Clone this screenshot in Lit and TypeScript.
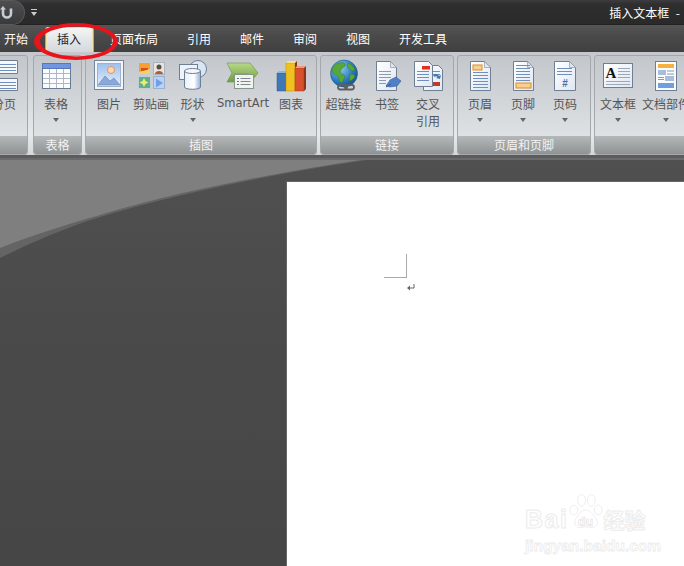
import { LitElement, html, css, svg } from "lit";
import { customElement } from "lit/decorators.js";

const docBase = (x: number, y: number, w: number, h: number) => svg`
  <path d="M${x} ${y}h${w - 6}l6 6v${h - 6}h${-w}z" fill="url(#paper)" stroke="#6f7f93"/>
  <path d="M${x + w - 6} ${y}v6h6z" fill="#dfe6ee" stroke="#8a98aa" stroke-width=".7"/>`;
const lines = (x: number, ys: number[], w: number, c = "#6f8fc0") =>
  ys.map((y) => svg`<path d="M${x} ${y}h${w}" stroke="${c}"/>`);

const defs = svg`<defs>
  <linearGradient id="paper" x1="0" y1="0" x2="1" y2="1"><stop offset="0" stop-color="#fff"/><stop offset="1" stop-color="#dfe7f2"/></linearGradient>
  <linearGradient id="sky" x1="0" y1="0" x2="0" y2="1"><stop offset="0" stop-color="#9cc0ec"/><stop offset="1" stop-color="#e8f0fb"/></linearGradient>
  <linearGradient id="cyl" x1="0" y1="0" x2="1" y2="0"><stop offset="0" stop-color="#e8f0fb"/><stop offset=".6" stop-color="#fff"/><stop offset="1" stop-color="#8eb0dc"/></linearGradient>
  <radialGradient id="globe" cx=".35" cy=".3" r=".8"><stop offset="0" stop-color="#8fd0f5"/><stop offset=".6" stop-color="#2a7cc0"/><stop offset="1" stop-color="#124a80"/></radialGradient>
  <linearGradient id="grn" x1="0" y1="0" x2="0" y2="1"><stop offset="0" stop-color="#b8d88a"/><stop offset="1" stop-color="#6fa03c"/></linearGradient>
</defs>`;

const icons: Record<string, unknown> = {
  pagebreak: svg`
    <path d="M1.5 1.5h30v13h-30z" fill="#f6f8fb" stroke="#6f7f93"/>${lines(3, [5.5, 8.5, 11.5], 27)}
    <path d="M1.5 19.5h30v12h-30z" fill="#f6f8fb" stroke="#6f7f93"/>${lines(3, [23.5, 26.5, 29.5], 27)}`,
  table: svg`
    <rect x="4.5" y="4.5" width="28" height="25" fill="#fbfcfe" stroke="#6a7a90"/>
    <rect x="4.5" y="4.5" width="28" height="5" fill="#6f96e0" stroke="#5678b8"/>
    <path d="M11.5 10v19M18.5 10v19M25.5 10v19M5 14.5h27M5 19.5h27M5 24.5h27" stroke="#aeb8c6"/>`,
  picture: svg`
    <rect x="3.5" y="1.5" width="29" height="29" fill="#f2f6fb" stroke="#76879c"/>
    <rect x="6.5" y="4.5" width="23" height="23" fill="url(#sky)" stroke="#9db2cc"/>
    <circle cx="20" cy="11" r="3.5" fill="#f8d8b8" stroke="#ee8f50"/>
    <path d="M7 26l7-9 5 5 4-3 6 7z" fill="#8aa9d8" stroke="#6684b4" stroke-width=".6"/>`,
  clip: svg`
    <rect x="5.5" y="3.5" width="12" height="12" fill="#f5a030" stroke="#c4ccd6"/><path d="M8 9h7v3h-7z" fill="#d84a20"/><path d="M6 13l11-3v5H6z" fill="#f8d060"/>
    <rect x="20.5" y="3.5" width="11" height="12" fill="#e8e4de" stroke="#aab4c0"/><circle cx="26" cy="8" r="2.5" fill="#55504a"/><path d="M22 15c0-4 8-4 8 0z" fill="#b85a30"/>
    <rect x="5.5" y="17.5" width="12" height="12" fill="#5fae90" stroke="#c4ccd6"/><path d="M11 19l1.500 3 3 1.500-3 1.500-1.500 3-1.500-3-3-1.500 3-1.500z" fill="#ecec70"/>
    <rect x="20.500" y="17.500" width="11" height="12" fill="#bcd2f4" stroke="#9cb0cc"/><path d="M23 19.500l7 4.500-7 4.500z" fill="#6f9fe8"/>`,
  shapes: svg`
    <circle cx="23" cy="10" r="8.500" fill="#dbe6f5" stroke="#6f7f93"/>
    <rect x="4.500" y="5.500" width="18" height="15" fill="#eef3fb" stroke="#6f7f93"/>
    <path d="M9.500 12v16c0 3 16 3 16 0V12z" fill="url(#cyl)" stroke="#6f7f93"/>
    <ellipse cx="17.500" cy="12" rx="8" ry="2.500" fill="#f4f8fe" stroke="#6f7f93"/>`,
  smartart: svg`
    <path d="M2 4h23l8 10-5 6H24v-5H9V23H2l5-9z" fill="url(#grn)" stroke="#6a9040" stroke-width=".6"/>
    <rect x="9.500" y="15.500" width="19" height="14" fill="#f2f3ec" stroke="#8a9488"/>
    <path d="M12 19.500h2M12 22.500h2M12 25.500h2" stroke="#4f7f80"/><path d="M15.500 19.500h10M15.500 22.500h10M15.500 25.500h10" stroke="#7a8a96"/>`,
  chart: svg`
    <path d="M4 14h9v18H4z" fill="#3f78b4" stroke="#2a5a90" stroke-width=".5"/><path d="M4 14l2-2h8l-1 2z" fill="#8cb4dc"/>
    <path d="M13 4h9v28h-9z" fill="#f0c020" stroke="#b88c10" stroke-width=".5"/><path d="M13 4l2-2h9l-2 2z" fill="#fae080"/>
    <path d="M22 9h9v23h-9z" fill="#d8502c" stroke="#a83818" stroke-width=".5"/><path d="M22 9l2-2h9l-2 2z" fill="#f09880"/>
    <path d="M22 4l2-2v5l-2 2zM31 9l2-2v23l-2 2z" fill="#8f3418"/>`,
  globe: svg`
    <circle cx="18" cy="14.500" r="13.500" fill="url(#globe)" stroke="#205880" stroke-width=".6"/>
    <path d="M9 6c4-3 8-3 10-1 1 3-3 3-4 6-2 3 1 4 3 5 2 2-1 5-2 8-3-1-3-4-4-7-3-1-4-3-6-4 0-3 1-5 3-7zM22 4c3 1 6 4 7 7-2 2-4 0-6-1-2-2-2-4-1-6zM25 15c2 0 3 1 4 2-1 3-3 4-5 5-1-3-1-5 1-7z" fill="#58a838" stroke="#327020" stroke-width=".4"/>
    <g fill="none" stroke="#5a5f66" stroke-width="1.800"><rect x="12" y="26" width="9" height="4.500" rx="2.200"/><rect x="19" y="26" width="9" height="4.500" rx="2.200"/></g>`,
  bookmark: svg`
    ${docBase(7.500, 2.500, 20, 29)}
    ${lines(10, [12.500, 15.500, 18.500], 12, "#8a9ab0")}${lines(10, [21.500, 24.500], 7, "#8a9ab0")}
    <path d="M17 27l4-6 6-3 5 4-4 5-7 1z" fill="#4f80c8" stroke="#345a98" stroke-width=".6"/><path d="M17 28l5-3" stroke="#345a98"/>`,
  cross: svg`
    <path d="M13.500 6.500h15l4 4v21h-19z" fill="url(#paper)" stroke="#6f7f93"/>
    ${lines(22, [12.500, 15.500], 8)}
    <rect x="23" y="23" width="7" height="4" fill="#c0392b"/>
    <path d="M4.500 2.500h14l4 4v21h-18z" fill="url(#paper)" stroke="#6f7f93"/>
    <rect x="12" y="7" width="8" height="3.500" fill="#e0301e"/>
    ${lines(7, [12.500, 15.500, 18.500, 21.500], 12)}
    <path d="M23 16c3-2 5-1 6 1l2-1-1 4-4-1 1.500-1c-1-1-2-1-3 0z" fill="#3f78b4"/>`,
  header: svg`
    ${docBase(8.500, 2.500, 20, 29)}
    <rect x="11" y="6" width="9" height="5" fill="#f5d090" stroke="#e08a20"/>
    ${lines(11, [13.500, 16.500, 19.500, 22.500, 25.500, 28.500], 15)}`,
  footer: svg`
    ${docBase(8.500, 2.500, 20, 29)}
    ${lines(11, [6.500, 9.500, 12.500, 15.500, 18.500, 21.500], 14)}
    <rect x="11" y="24" width="15" height="5" fill="#f5d090" stroke="#e08a20"/>`,
  pagenum: svg`
    ${docBase(7.500, 2.500, 21, 29)}
    ${lines(10, [9.500, 12.500, 15.500], 15)}
    <text x="18" y="28" text-anchor="middle" font-family="Liberation Sans, sans-serif" font-weight="700" font-size="10" fill="#4f6fa0">#</text>`,
  textbox: svg`
    <rect x="3.500" y="4.500" width="29" height="24" fill="url(#paper)" stroke="#6f7f93"/>
    <text x="11" y="19" text-anchor="middle" font-family="Liberation Serif, serif" font-weight="700" font-size="15" fill="#111">A</text>
    ${lines(18, [9.500, 12.500, 15.500, 18.500], 12, "#9aa8bc")}${lines(6, [22.500, 25.500], 24, "#9aa8bc")}`,
  parts: svg`
    <rect x="7.500" y="2.500" width="21" height="29" fill="#fbfcfe" stroke="#6f7f93"/>
    <rect x="10" y="5" width="16" height="4" fill="#f6b040"/>
    <rect x="10" y="11" width="8" height="5" fill="#a9bcd8"/><path d="M19 12h7M19 15h7" stroke="#8098bc"/>
    <path d="M10 18.500h6M10 20.500h6" stroke="#8098bc"/><rect x="17" y="17" width="9" height="5" fill="#a9bcd8"/>
    <rect x="10" y="24" width="16" height="5" fill="#6f9fe0"/>`,
};

type Item = { label: string; icon: string; w: number; caret?: boolean };
type Group = { title: string; w: number; ml?: number; pad?: number; items: Item[] };

const groups: Group[] = [
  { title: "", w: 58, ml: -30, pad: 13, items: [{ label: "分页", icon: "pagebreak", w: 40 }] },
  { title: "表格", w: 49, ml: 2, items: [{ label: "表格", icon: "table", w: 44, caret: true }] },
  {
    title: "插图", w: 232, items: [
      { label: "图片", icon: "picture", w: 46 },
      { label: "剪贴画", icon: "clip", w: 38 },
      { label: "形状", icon: "shapes", w: 45, caret: true },
      { label: "SmartArt", icon: "smartart", w: 56 },
      { label: "图表", icon: "chart", w: 40 },
    ],
  },
  {
    title: "链接", w: 134, items: [
      { label: "超链接", icon: "globe", w: 45 },
      { label: "书签", icon: "bookmark", w: 42 },
      { label: "交叉\n引用", icon: "cross", w: 40 },
    ],
  },
  {
    title: "页眉和页脚", w: 134, items: [
      { label: "页眉", icon: "header", w: 44, caret: true },
      { label: "页脚", icon: "footer", w: 42, caret: true },
      { label: "页码", icon: "pagenum", w: 42, caret: true },
    ],
  },
  {
    title: "", w: 100, items: [
      { label: "文本框", icon: "textbox", w: 46, caret: true },
      { label: "文档部件", icon: "parts", w: 50, caret: true },
    ],
  },
];

const tabs = ["开始", "插入", "页面布局", "引用", "邮件", "审阅", "视图", "开发工具"];

@customElement("app-root")
export class AppRoot extends LitElement {
  static styles = css`
    :host {
      display: block;
      position: relative;
      width: 684px;
      height: 566px;
      overflow: hidden;
      font-family: "Noto Sans CJK SC", "Noto Sans", sans-serif;
      font-size: 12px;
      background: #4a4a4a;
    }
    .title {
      height: 25px;
      display: flex;
      align-items: center;
      background: linear-gradient(#3d3d40 0, #2f2f30 4px, #2a2a2a 100%);
      color: #fff;
      border-bottom: 1px solid #222;
      box-sizing: border-box;
    }
    .orb {
      width: 25px;
      height: 25px;
      border-radius: 0 13px 13px 0;
      background: linear-gradient(#4e4e50, #3a3a3c);
      border: 1px solid #5a5a5a;
      border-left: none;
      box-sizing: border-box;
      display: flex;
      align-items: center;
    }
    .qat { margin-left: 5px; display: flex; }
    .caption { margin-left: auto; padding-right: 4px; white-space: pre; line-height: 25px; word-spacing: 4px; }
    .tabs {
      height: 27px;
      display: flex;
      background: linear-gradient(#555 0, #4a4a4a 40%, #404040 100%);
      color: #fff;
    }
    .tab {
      padding: 0 11.5px;
      margin: 2px 3px 0;
      line-height: 24px;
      white-space: nowrap;
    }
    .tab:first-child { margin-left: -7.5px; }
    .tab.active {
      color: #222;
      background: linear-gradient(#f4f5f6, #d4d8dc);
      border-radius: 3px 3px 0 0;
      box-shadow: inset 1px 0 #f3e2a8, inset -1px 0 #f3e2a8, inset 0 1px #f5d98a, 1px 0 #d0a53c, -1px 0 #d0a53c;
    }
    .ribbon {
      height: 106px;
      box-sizing: border-box;
      padding-top: 3px;
      display: flex;
      gap: 3px;
      background: linear-gradient(#c4c8cc, #e6e9ea 80%, #d6d9d9);
      border-bottom: 3px solid #5c5c5c;
    }
    .group {
      flex: none;
      height: 100px;
      box-sizing: border-box;
      border: 1px solid #a4a8ac;
      border-radius: 3px;
      display: flex;
      flex-direction: column;
      overflow: hidden;
      background: linear-gradient(#c3c7cc 0, #cdd0d4 30%, #e5e8e9 100%);
    }
    .items { flex: 1; display: flex; min-height: 0; padding-top: 3px; }
    .item {
      flex: none;
      display: flex;
      flex-direction: column;
      align-items: center;
      color: #555;
      line-height: 17px;
      text-align: center;
      white-space: pre-line;
    }
    .item svg { flex: none; display: block; margin-bottom: 4px; overflow: visible; }
    .label { white-space: pre-line; }
    .latin { font-family: "DejaVu Sans", sans-serif; font-size: 11.5px; white-space: nowrap; }
    .caret {
      width: 0;
      height: 0;
      margin-top: 6px;
      border: 3.5px solid transparent;
      border-top: 4px solid #666;
      border-bottom: none;
    }
    .foot {
      height: 18px;
      flex: none;
      line-height: 17px;
      text-align: center;
      color: #f2f2f2;
      background: linear-gradient(#b4b8b8, #909393);
    }
    .doc { position: relative; height: 408px; padding: 24px 0 0 287px; box-sizing: border-box; }
    .swoosh { position: absolute; left: 0; top: 0; width: 684px; height: 408px; }
    .page {
      position: relative;
      height: 384px;
      background: #fff;
      box-shadow: 0 0 0 1px #666;
    }
    .crop {
      width: 23px;
      height: 24px;
      position: absolute;
      left: 97px;
      top: 72px;
      box-sizing: border-box;
      border-right: 1px solid #aaa;
      border-bottom: 1px solid #aaa;
    }
    .ret { position: absolute; left: 120px; top: 102px; width: 8px; height: 8px; }
    .ring { position: absolute; left: 30px; top: 19px; width: 92px; height: 46px; pointer-events: none; }
    .mark {
      position: absolute;
      left: 525px;
      top: 493px;
      width: 125px;
      color: #fff;
      pointer-events: none;
      font-family: "Liberation Sans", sans-serif;
      -webkit-text-stroke: 1px #ececec;
    }
    .mark-top { display: flex; align-items: flex-end; height: 38px; font-weight: 700; font-size: 25px; line-height: 24px; }
    .mark-top > span:first-child { letter-spacing: 1.5px; }
    .mark-top svg { flex: none; margin: 0; }
    .mark-cn { font-family: "Noto Sans CJK SC", sans-serif; font-size: 21px; line-height: 24px; white-space: nowrap; }
    .mark-url { font-size: 15.5px; font-weight: 700; line-height: 18px; margin-top: 6px; white-space: nowrap; -webkit-text-stroke: .8px #ececec; }
  `;

  private renderItem(it: Item) {
    const latin = /^[A-Za-z]+$/.test(it.label);
    return html`<div class="item" style="width:${it.w}px">
      <svg width="36" height="32" viewBox="0 0 36 32">${defs}${icons[it.icon]}</svg>
      <span class="label ${latin ? "latin" : ""}">${it.label}</span>
      ${it.caret ? html`<i class="caret"></i>` : null}
    </div>`;
  }

  render() {
    return html`
      <div class="title">
        <div class="orb">
          <svg width="14" height="14" viewBox="0 0 14 14">
            <path d="M3 3.500v5a4 4 0 0 0 8 0V3.500" fill="none" stroke="#c4ccd4" stroke-width="2.600"/>
            <path d="M0 4.500l3-3.500 3 3.500z" fill="#c4ccd4"/>
          </svg>
        </div>
        <div class="qat">
          <svg width="8" height="9" viewBox="0 0 8 9"><path d="M1 1.500h6" stroke="#ccc"/><path d="M1 4h6L4 8z" fill="#ccc"/></svg>
        </div>
        <div class="caption">插入文本框 -</div>
      </div>
      <div class="tabs">
        ${tabs.map((t, i) => html`<div class="tab ${i === 1 ? "active" : ""}">${t}</div>`)}
      </div>
      <div class="ribbon">
        ${groups.map(
          (g) => html`<section class="group" style="width:${g.w}px;margin-left:${g.ml ?? 0}px">
            <div class="items" style="padding-left:${g.pad ?? 0}px">${g.items.map((it) => this.renderItem(it))}</div>
            <div class="foot">${g.title}</div>
          </section>`
        )}
      </div>
      <div class="doc">
        <svg class="swoosh" viewBox="0 0 684 408">
          <defs>
            <linearGradient id="dk" x1="0" y1="0" x2="0" y2="1"><stop offset="0" stop-color="#505050"/><stop offset=".4" stop-color="#4a4a4a"/><stop offset="1" stop-color="#464646"/></linearGradient>
          </defs>
          <rect width="684" height="408" fill="url(#dk)"/>
          <path d="M0 0H684V2H367C260 18 165 39 100 59C65 70 30 85 0 100z" fill="#646464"/>
          <path d="M0 0H684V1H367C260 17 165 37 100 57C65 67 33 77 0 90z" fill="#7f7f7f"/>
          <rect width="684" height="2" fill="#6b6b6b"/>
        </svg>
        <div class="page">
          <div class="crop"></div>
          <svg class="ret" viewBox="0 0 8 8"><path d="M7 0v4H2" fill="none" stroke="#666"/><path d="M0 4l3-2.500v5z" fill="#666"/></svg>
        </div>
      </div>
      <svg class="ring" viewBox="0 0 92 46">
        <path fill-rule="evenodd" fill="#e8141c" d="M4 22.500a42 18.500 0 1 0 84 0a42 18.500 0 1 0-84 0zM10 22.500a36.500 15 0 1 1 73 0a36.500 15 0 1 1-73 0z"/>
      </svg>
      <div class="mark">
        <div class="mark-top">
          <span>Bai</span>
          <svg width="35" height="38" viewBox="0 0 36 38">
            <g fill="#fff" stroke="#ececec">
              <ellipse cx="6" cy="17" rx="4" ry="5"/>
              <ellipse cx="14" cy="7" rx="4" ry="6"/>
              <ellipse cx="24" cy="7" rx="4" ry="6"/>
              <ellipse cx="31" cy="17" rx="4" ry="5"/>
              <path d="M18 17c-5 0-7 5-10 9-3 5 1 10 6 9 3-1 6-1 9 0 6 1 9-4 6-9-3-4-6-9-11-9z"/>
            </g>
            <text x="18" y="33" text-anchor="middle" font-family="Liberation Sans, sans-serif" font-size="13" font-weight="700" fill="#fff" stroke="#e4e4e4" stroke-width=".7">du</text>
          </svg>
          <span class="mark-cn">经验</span>
        </div>
        <div class="mark-url">jingyan.baidu.com</div>
      </div>
    `;
  }
}
